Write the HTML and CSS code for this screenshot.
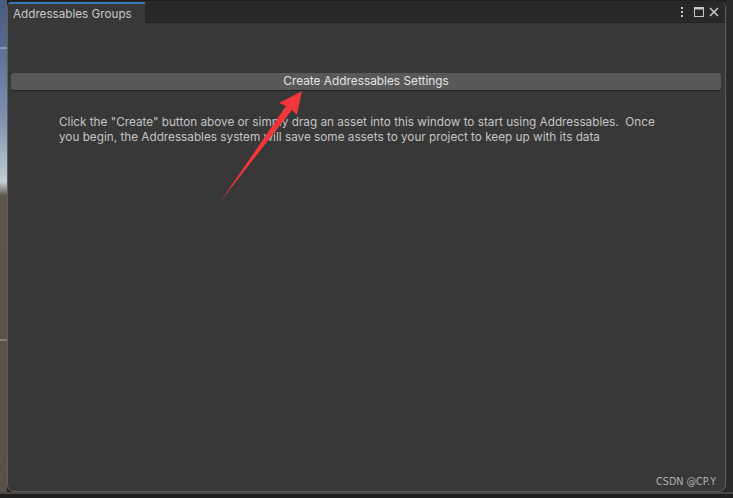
FILE: index.html
```html
<!DOCTYPE html>
<html>
<head>
<meta charset="utf-8">
<link rel="stylesheet" href="styles.css">
</head>
<body>
<div class="screen">
  <div class="desk-left"></div>
  <div class="window">
    <div class="tabbar">
      <div class="tab">Addressables Groups</div>
      <div class="tab-tools">
        <svg class="ico" width="10" height="12" viewBox="0 0 10 12"><rect x="4" y="1" width="2" height="2" fill="#c8c8c8"/><rect x="4" y="5" width="2" height="2" fill="#c8c8c8"/><rect x="4" y="9" width="2" height="2" fill="#c8c8c8"/></svg>
        <svg class="ico box" width="12" height="12" viewBox="0 0 12 12"><rect x="1.5" y="1.5" width="9" height="9" fill="none" stroke="#c8c8c8" stroke-width="1"/><rect x="1.5" y="1.5" width="9" height="2" fill="#c8c8c8"/></svg>
        <svg class="ico" width="12" height="12" viewBox="0 0 12 12"><path d="M2 2 L10 10 M10 2 L2 10" stroke="#c8c8c8" stroke-width="1.6"/></svg>
      </div>
    </div>
    <div class="content">
      <button class="create-btn">Create Addressables Settings</button>
      <p class="hint">Click the "Create" button above or simply drag an asset into this window to start using Addressables.&nbsp; Once<br>you begin, the Addressables system will save some assets to your project to keep up with its data</p>
      <div class="spacer"></div>
      <div class="watermark">CSDN @CP.Y</div>
    </div>
  </div>
  <div class="desk-right"></div>
</div>
<div class="bottom-strip"></div>
<svg class="arrow" width="733" height="498" viewBox="0 0 733 498"><polygon points="302,91 279,103 286,106 220,202 292,110 297,115" fill="#f2373a"/></svg>
</body>
</html>
```
FILE: styles.css
```css
html, body {
  margin: 0;
  padding: 0;
}
body {
  width: 733px;
  height: 498px;
  overflow: hidden;
  background: #1f1f1f;
  position: relative;
  font-family: Inter, "Noto Sans", sans-serif;
}
.screen {
  display: flex;
  height: 492px;
}
.desk-left {
  width: 7px;
  flex: none;
  background: linear-gradient(#4b5b7e 0px, #55688e 47px, #b8c2d2 48px, #5c6f94 49px, #7f93b0 120px, #c2cdd2 182px, #5b564f 196px, #58534d 339px, #b0aca6 340px, #58534d 341px, #56514b 492px);
}
.desk-right {
  width: 7px;
  flex: none;
  background: #2b2b2b;
}
.window {
  flex: 1;
  display: flex;
  flex-direction: column;
  background: #383838;
  border: 1px solid #5e5e5e;
  border-top: none;
  border-radius: 6px 6px 7px 7px;
  overflow: hidden;
  margin-top: 1px;
}
.tabbar {
  height: 21px;
  flex: none;
  background: #282828;
  border-bottom: 1px solid #232323;
  display: flex;
  align-items: flex-end;
  justify-content: space-between;
}
.tab {
  width: 132px;
  height: 19px;
  background: #383838;
  border-top: 2px solid #3b74b5;
  color: #c8c8c8;
  font-size: 11.7px;
  line-height: 20px;
  padding-left: 5px;
  margin-bottom: -1px;
}
.tab-tools {
  display: flex;
  align-items: center;
  height: 21px;
  padding-right: 5px;
}
.ico { display: block; }
.box { margin: 0 3px 0 6px; }
.content {
  flex: 1;
  display: flex;
  flex-direction: column;
  padding: 50px 4px 0 3px;
}
.create-btn {
  height: 18px;
  padding: 0;
  background: #585858;
  border: none;
  border-bottom: 1px solid #222;
  border-radius: 3px;
  color: #e4e4e4;
  font-family: Inter, "Noto Sans", sans-serif;
  font-size: 11.85px;
  line-height: 17px;
  text-align: center;
}
.hint {
  margin: 24px 0 0 48px;
  color: #c4c4c4;
  font-size: 11.75px;
  line-height: 15px;
  white-space: nowrap;
}
.spacer { flex: 1; }
.watermark {
  align-self: flex-end;
  font-family: "DejaVu Sans", sans-serif;
  font-size: 9.6px;
  color: #b0b0b0;
  margin: 0 5px 4px 0;
}
.bottom-strip {
  height: 6px;
  background: linear-gradient(#4a4743 0 2px, #1f1f1f 2px);
}
.arrow {
  position: absolute;
  left: 0;
  top: 0;
  pointer-events: none;
}
```
